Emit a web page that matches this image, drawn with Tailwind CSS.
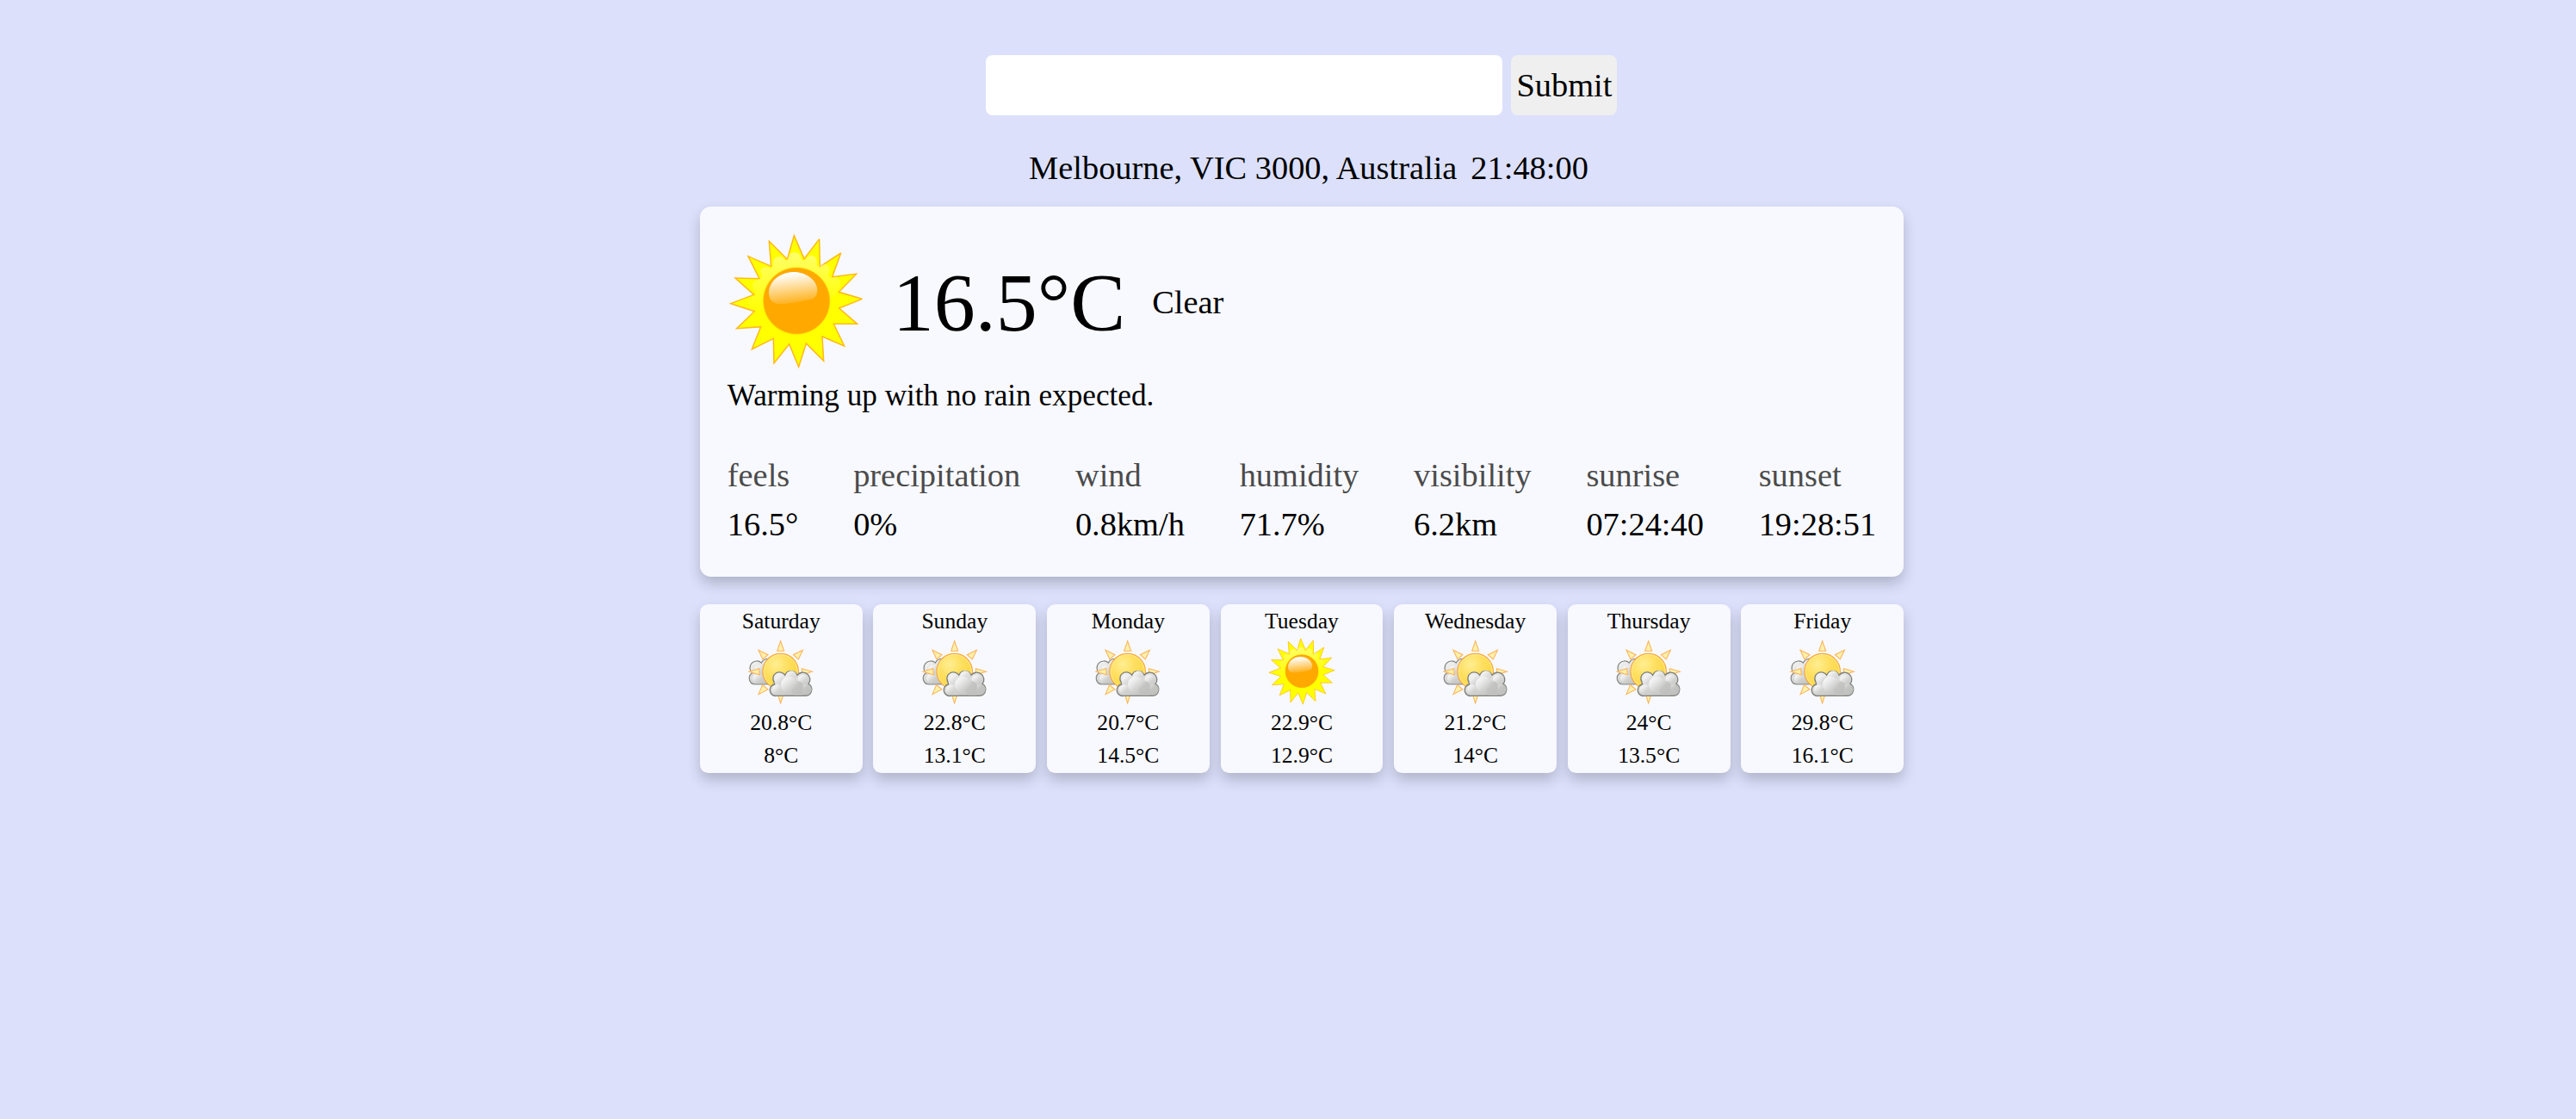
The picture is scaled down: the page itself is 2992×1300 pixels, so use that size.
<!DOCTYPE html>
<html lang="en">
<head>
<meta charset="utf-8">
<title>Weather</title>
<script src="https://cdn.jsdelivr.net/npm/@tailwindcss/browser@4"></script>
</head>
<body class="min-h-screen bg-[#dce0fb] font-['Liberation_Serif',serif] text-[38.4px] leading-[44px] text-black">

<svg width="0" height="0" class="absolute" aria-hidden="true">
  <defs>
    <linearGradient id="gloss" x1="0.4" y1="0" x2="0.58" y2="1"><stop offset="0.05" stop-color="#fff"/><stop offset="1" stop-color="#fff" stop-opacity="0.08"/></linearGradient>
    <linearGradient id="halo" x1="0.45" y1="0" x2="0.55" y2="1"><stop offset="0" stop-color="#fff" stop-opacity="0.42"/><stop offset="0.65" stop-color="#fff" stop-opacity="0.12"/><stop offset="1" stop-color="#fff" stop-opacity="0"/></linearGradient>
    <radialGradient id="core"><stop offset="0.94" stop-color="#ffa800"/><stop offset="0.97" stop-color="#ffb400"/><stop offset="1" stop-color="#ffe000" stop-opacity="0.5"/></radialGradient>
    <radialGradient id="disc" cx="0.36" cy="0.3" r="0.7"><stop offset="0" stop-color="#ffee92"/><stop offset="0.5" stop-color="#ffdf60"/><stop offset="1" stop-color="#fdd640"/></radialGradient>
    <linearGradient id="cloud" x1="0.1" y1="0.1" x2="0.75" y2="1"><stop offset="0" stop-color="#f4f4f4"/><stop offset="0.6" stop-color="#d3d3d2"/><stop offset="1" stop-color="#bdbdbb"/></linearGradient>
    <linearGradient id="puff" x1="0.1" y1="0.1" x2="0.8" y2="0.9"><stop offset="0" stop-color="#fafafa"/><stop offset="0.4" stop-color="#e6e6e6"/><stop offset="1" stop-color="#c4c4c2" stop-opacity="0.1"/></linearGradient>
    <linearGradient id="puffDark" x1="0.1" y1="0.1" x2="0.7" y2="0.8"><stop offset="0" stop-color="#dedede"/><stop offset="0.5" stop-color="#c4c4c2"/><stop offset="1" stop-color="#c0c0be"/></linearGradient>

    <symbol id="sunny" viewBox="0 0 480 480">
      <path transform="translate(-18 -30)" fill="#ffff00" stroke="#ffb91a" stroke-width="4.500" stroke-linejoin="miter" stroke-miterlimit="3" d="M250 41L285 122L338 53L340 150L413 102L383 185L467 175L406 238L487 262L407 294L470 349L388 349L425 426L348 393L353 478L292 417L266 499L233 419L180 486L178 400L103 437L134 359L50 365L112 305L29 278L110 247L45 189L129 191L90 113L170 148L163 61L226 124Z"/>
      <path transform="translate(-18 -30)" fill="#ffff00" d="M285 126L335 155L378 188L402 240L402 294L383 346L344 388L292 412L234 414L181 395L139 357L117 305L115 249L134 195L174 152L227 129Z"/>
      <path transform="translate(-18 -30)" fill="url(#halo)" d="M228 122Q233 100 252 100Q271 100 276 125Q283 132 292 122Q305 105 319 113Q332 120 329 146Q335 153 344 145Q362 136 371 149Q378 160 368 182Q374 190 388 186Q407 185 411 202Q414 219 400 236C390 285 150 300 106 310Q89 297 90 274Q91 258 115 249Q119 240 107 226Q101 207 116 198Q125 190 134 191Q143 184 133 169Q131 155 145 151Q154 148 168 156Q178 153 176 136Q179 116 197 115Q209 112 219 127Q225 130 228 122Z"/>
      <circle cx="240.500" cy="238.500" r="118" fill="url(#core)"/>
      <path transform="translate(-18 -30)" fill="url(#gloss)" d="M250 168C290 168 330 195 331 230C331 250 321 261 307 264C270 270 235 282 195 279C174 278 162 262 162 240C164 197 204 168 250 168Z"/>
    </symbol>

    <symbol id="partly" viewBox="0 0 240 240">
      <path fill="url(#cloud)" stroke="#83857f" stroke-width="3.600" d="M30 165A21 21 0 0 1 20 126A24 24 0 0 1 52 90Q60 74 82 76L110 120L96 165Z"/>
      <circle cx="45" cy="116" r="18" fill="url(#puff)"/>
      <circle cx="38" cy="145" r="17" fill="url(#puff)"/>
      <g fill="#fff0a0" fill-opacity="0.9" stroke="#fbb45c" stroke-width="3.200">
        <path d="M119 14L107 49H131Z"/><path d="M196 46L163 62L181 78Z"/><path d="M42 46L75 62L57 78Z"/><path d="M9 121L44 110L46 132Z"/><path d="M229 121L193 110V132Z"/><path d="M42 200L56 167L75 183Z"/><path d="M119 231L107 193H131Z"/>
      </g>
      <circle cx="119" cy="120" r="62" fill="url(#disc)" stroke="#fba733" stroke-width="4"/>
      <circle cx="119" cy="120" r="58.500" fill="none" stroke="#ffeda0" stroke-width="3"/>
      <path fill="url(#cloud)" stroke="#7d7f79" stroke-width="4" d="M106 205A20 20 0 0 1 98 165A20 20 0 0 1 96 157A20 20 0 0 1 134 133A23 22 0 0 1 177 133A22 22 0 0 1 216 164A22 22 0 0 1 208 205Z"/>
      <circle cx="117" cy="151" r="17" fill="url(#puff)"/>
      <circle cx="107" cy="183" r="17" fill="url(#puff)"/>
      <circle cx="157" cy="137" r="19" fill="url(#puff)"/>
      <circle cx="197" cy="149" r="18" fill="url(#puff)"/>
      <circle cx="148" cy="166" r="28" fill="url(#puff)"/>
      <circle cx="208" cy="183" r="19" fill="url(#puffDark)"/>
      <path d="M156 184A22 22 0 0 1 197 166L196 203H167Q156 196 156 184Z" fill="url(#puffDark)"/>
    </symbol>
  </defs>
</svg>

<main class="ml-[812.8px] flex w-[1398.4px] flex-col pt-16">
  <form class="flex h-[70.4px] justify-center gap-[10px]">
    <input type="text" aria-label="Location" class="h-[70.4px] w-[600px] rounded-[8px] bg-white">
    <button type="button" class="h-[70.4px] w-[123px] rounded-[8px] bg-[#efefef]">Submit</button>
  </form>

  <div class="mt-[38.6px] flex justify-center gap-4 whitespace-nowrap pl-4">
    <span>Melbourne, VIC 3000, Australia</span>
    <span>21:48:00</span>
  </div>

  <section class="mt-[23px] h-[430.4px] rounded-[12.8px] bg-[#f8f9ff] px-8 pt-[30px] shadow-[0_8px_16px_rgba(0,0,0,0.2)]">
    <div class="flex h-40 items-center">
      <svg class="size-40"><use href="#sunny"/></svg>
      <span class="ml-8 pt-1 text-[96px] leading-[110px]">16.5°C</span>
      <span class="ml-[31px] pt-[3px]">Clear</span>
    </div>
    <p class="mt-2 text-[35.2px] leading-[44px]">Warming up with no rain expected.</p>
    <dl class="mt-12 flex justify-between">
      <div><dt class="text-[#4b4b4b]">feels</dt><dd class="mt-[13px]">16.5°</dd></div>
      <div><dt class="text-[#4b4b4b]">precipitation</dt><dd class="mt-[13px]">0%</dd></div>
      <div><dt class="text-[#4b4b4b]">wind</dt><dd class="mt-[13px]">0.8km/h</dd></div>
      <div><dt class="text-[#4b4b4b]">humidity</dt><dd class="mt-[13px]">71.7%</dd></div>
      <div><dt class="text-[#4b4b4b]">visibility</dt><dd class="mt-[13px]">6.2km</dd></div>
      <div><dt class="text-[#4b4b4b]">sunrise</dt><dd class="mt-[13px]">07:24:40</dd></div>
      <div><dt class="text-[#4b4b4b]">sunset</dt><dd class="mt-[13px]">19:28:51</dd></div>
    </dl>
  </section>

  <section class="mt-8 grid grid-cols-7 gap-[12.8px] text-center text-[25.6px] leading-[38px]">
    <article class="flex h-[195.4px] flex-col items-center rounded-[9.6px] bg-[#f8f9ff] shadow-[0_8px_16px_rgba(0,0,0,0.2)]"><h2 class="h-[38px] leading-[40px]">Saturday</h2><svg class="mb-px size-20"><use href="#partly"/></svg><p>20.8°C</p><p>8°C</p></article>
    <article class="flex h-[195.4px] flex-col items-center rounded-[9.6px] bg-[#f8f9ff] shadow-[0_8px_16px_rgba(0,0,0,0.2)]"><h2 class="h-[38px] leading-[40px]">Sunday</h2><svg class="mb-px size-20"><use href="#partly"/></svg><p>22.8°C</p><p>13.1°C</p></article>
    <article class="flex h-[195.4px] flex-col items-center rounded-[9.6px] bg-[#f8f9ff] shadow-[0_8px_16px_rgba(0,0,0,0.2)]"><h2 class="h-[38px] leading-[40px]">Monday</h2><svg class="mb-px size-20"><use href="#partly"/></svg><p>20.7°C</p><p>14.5°C</p></article>
    <article class="flex h-[195.4px] flex-col items-center rounded-[9.6px] bg-[#f8f9ff] shadow-[0_8px_16px_rgba(0,0,0,0.2)]"><h2 class="h-[38px] leading-[40px]">Tuesday</h2><svg class="mb-px size-20"><use href="#sunny"/></svg><p>22.9°C</p><p>12.9°C</p></article>
    <article class="flex h-[195.4px] flex-col items-center rounded-[9.6px] bg-[#f8f9ff] shadow-[0_8px_16px_rgba(0,0,0,0.2)]"><h2 class="h-[38px] leading-[40px]">Wednesday</h2><svg class="mb-px size-20"><use href="#partly"/></svg><p>21.2°C</p><p>14°C</p></article>
    <article class="flex h-[195.4px] flex-col items-center rounded-[9.6px] bg-[#f8f9ff] shadow-[0_8px_16px_rgba(0,0,0,0.2)]"><h2 class="h-[38px] leading-[40px]">Thursday</h2><svg class="mb-px size-20"><use href="#partly"/></svg><p>24°C</p><p>13.5°C</p></article>
    <article class="flex h-[195.4px] flex-col items-center rounded-[9.6px] bg-[#f8f9ff] shadow-[0_8px_16px_rgba(0,0,0,0.2)]"><h2 class="h-[38px] leading-[40px]">Friday</h2><svg class="mb-px size-20"><use href="#partly"/></svg><p>29.8°C</p><p>16.1°C</p></article>
  </section>
</main>
</body>
</html>
